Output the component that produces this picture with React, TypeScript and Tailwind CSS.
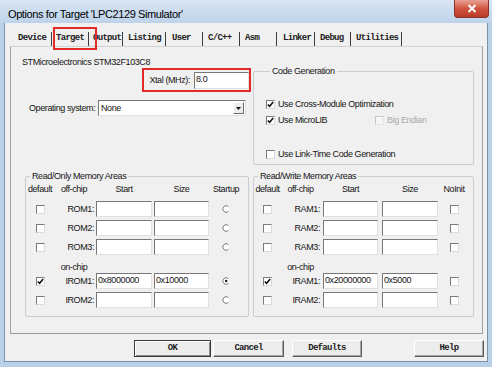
import React from 'react';

const sans = "font-['Liberation_Sans',Arial,sans-serif] text-[9px] leading-[12px] tracking-[-0.4px] text-[#151515] whitespace-nowrap";
const mono = "font-['Liberation_Mono','Courier_New',monospace] text-[9px] font-bold tracking-[-0.7px] text-[#1c1c1c] whitespace-nowrap";

const tabs: [string, string][] = [
  ['Device', 'w-[42px] pl-[8px]'],
  ['Target', 'w-[37px] pl-[4px]'],
  ['Output', 'w-[34px] pl-[4px]'],
  ['Listing', 'w-[43px] pl-[5px]'],
  ['User', 'w-[37px] pl-[6px]'],
  ['C/C++', 'w-[37px] pl-[5px]'],
  ['Asm', 'w-[37px] pl-[5px]'],
  ['Linker', 'w-[38px] pl-[6px]'],
  ['Debug', 'w-[36px] pl-[5px]'],
  ['Utilities', 'w-[51px] pl-[5px]'],
];

function Check({ on = false, disabled = false }: { on?: boolean; disabled?: boolean }) {
  return (
    <span
      className={
        disabled
          ? 'inline-block w-[9px] h-[9px] shrink-0 border border-t-[#c6c6c6] border-l-[#c6c6c6] border-r-[#e6e6e6] border-b-[#e6e6e6] bg-[#f5f5f5]'
          : 'inline-block w-[9px] h-[9px] shrink-0 border border-t-[#7a7a7a] border-l-[#7a7a7a] border-r-[#dadada] border-b-[#dadada] bg-white'
      }
    >
      {on && (
        <svg width="7" height="7" viewBox="0 0 7 7" className="block">
          <path d="M0.8 3.4 L2.6 5.3 L6.2 1" fill="none" stroke="#111" strokeWidth="1.5" />
        </svg>
      )}
    </span>
  );
}

function Radio({ on = false }: { on?: boolean }) {
  return (
    <svg width="8" height="8" viewBox="0 0 8 8" className="block">
      <circle cx="4" cy="4" r="3.2" fill="#fff" />
      <path d="M6.4 1.6 A3.3 3.3 0 1 0 6.4 6.4" fill="none" stroke="#7a7a7a" strokeWidth="1" />
      {on && <circle cx="4.2" cy="4" r="1.2" fill="#111" />}
    </svg>
  );
}

function Field({ w, value }: { w: string; value?: string }) {
  return (
    <div
      className={`${w} h-[16px] shrink-0 bg-white border border-t-[#777] border-l-[#777] border-r-[#e0e0e0] border-b-[#e0e0e0] pl-[1px] ${sans}`}
    >
      {value}
    </div>
  );
}

type Cols = { c1: string; c2: string; c3: string; c4: string; c5: string };

const romCols: Cols = {
  c1: 'w-[28px]',
  c2: 'w-[41px] pr-[1px]',
  c3: 'ml-[1px] w-[56px]',
  c4: 'ml-[2px] w-[55px]',
  c5: 'w-[34px]',
};

const ramCols: Cols = {
  c1: 'w-[27px]',
  c2: 'w-[40px] pr-[1px]',
  c3: 'ml-[2px] w-[55px]',
  c4: 'ml-[4px] w-[56px]',
  c5: 'w-[32px]',
};

type Row = { label: string; mt: string; def?: boolean; start?: string; size?: string; pick?: boolean };

function MemArea({
  title,
  cols,
  w,
  lastHead,
  radio,
  rows,
}: {
  title: string;
  cols: Cols;
  w: string;
  lastHead: string;
  radio: boolean;
  rows: Row[];
}) {
  return (
    <fieldset className={`${w} border border-[#c9ced3] rounded-[2px] pb-[8px]`}>
      <legend className={`${sans} ml-[4px] px-[2px]`}>{title}</legend>
      <div className={`flex pt-[1px] ${sans}`}>
        <span className={`${cols.c1} text-center`}>default</span>
        <span className={`${cols.c2} text-center`}>off-chip</span>
        <span className={`${cols.c3} text-center`}>Start</span>
        <span className={`${cols.c4} text-center`}>Size</span>
        <span className={`${cols.c5} text-center`}>{lastHead}</span>
      </div>
      {rows.map((r) =>
        r.label === 'on-chip' ? (
          <div key={r.label} className={`flex ${r.mt} ${sans}`}>
            <span className={cols.c1} />
            <span className={`${cols.c2} text-center`}>on-chip</span>
          </div>
        ) : (
          <div key={r.label} className={`flex items-center h-[16px] ${r.mt}`}>
            <span className={`${cols.c1} flex justify-center`}>
              <Check on={r.def} />
            </span>
            <span className={`${cols.c2} text-right ${sans}`}>{r.label}</span>
            <Field w={cols.c3} value={r.start} />
            <Field w={cols.c4} value={r.size} />
            <span className={`${cols.c5} flex justify-center`}>
              {radio ? <Radio on={r.pick} /> : <Check />}
            </span>
          </div>
        ),
      )}
    </fieldset>
  );
}

function Button({ label, w, main = false }: { label: string; w: string; main?: boolean }) {
  return (
    <div
      className={
        main
          ? `${w} h-[17px] flex items-center justify-center bg-[#ededed] border border-[#3a3a3a] shadow-[inset_1px_1px_0_#fff,inset_-1px_-1px_0_#8a8a8a] ${mono}`
          : `${w} h-[17px] flex items-center justify-center bg-[#ededed] border border-t-[#fff] border-l-[#fff] border-r-[#5a5a5a] border-b-[#5a5a5a] shadow-[inset_-1px_-1px_0_#a6a6a6] ${mono}`
      }
    >
      {label}
    </div>
  );
}

export default function App() {
  return (
    <div className="w-[492px] h-[367px] bg-[#b9d0e9] flex flex-col overflow-hidden">
      {/* title bar */}
      <div className="h-[23px] shrink-0 flex items-start justify-between bg-gradient-to-b from-[#d9e6f4] to-[#bed3eb]">
        <span className="pl-[8px] pt-[7px] font-['Liberation_Sans',Arial,sans-serif] text-[11px] leading-[14px] tracking-[-0.4px] text-black whitespace-nowrap">
          Options for Target &apos;LPC2129 Simulator&apos;
        </span>
        <div className="mr-[3px] w-[35px] h-[18px] rounded-b-[4px] border border-t-0 border-[#8a3227] bg-gradient-to-b from-[#e8a294] via-[#d0543f] to-[#b9392a] flex items-center justify-center">
          <svg width="10" height="9" viewBox="0 0 10 9">
            <path d="M1.5 1 L8.5 8 M8.5 1 L1.5 8" stroke="#fff" strokeWidth="2" />
          </svg>
        </div>
      </div>

      {/* client area */}
      <div className="relative ml-[4px] w-[484px] h-[339px] bg-[#f0f0f0] border-x border-b border-[#7d91aa] pt-[9px] flex flex-col">
        {/* tabs */}
        <div className="flex h-[14px] pl-[5px]">
          {tabs.map(([t, cls]) => (
            <span key={t} className={`${cls} h-[14px] leading-[13px] border-r border-r-[#3c3c3c] ${mono}`}>
              {t}
            </span>
          ))}
        </div>
        <div className="absolute left-[48px] top-[4px] w-[44px] h-[23px] border-2 border-[#e12a2a]" />

        {/* tab page */}
        <div className="ml-[5px] w-[473px] h-[288px] border-t border-t-[#d2d2d2] border-x border-x-[#a2a2a2] border-b border-b-[#9a9a9a] pl-[14px] pr-[8px] flex flex-col">
          <div className={`${sans} -ml-[3px] mt-[9px]`}>STMicroelectronics STM32F103C8</div>

          <div className="flex gap-[4px] -mt-[3px]">
            <div className="w-[224px] pt-[3px] flex flex-col">
              <div className="flex justify-end -mr-[2px]">
                <div className="h-[24px] border-2 border-[#e12a2a] pl-[5px] flex items-center gap-[4px]">
                  <span className={sans}>Xtal (MHz):</span>
                  <Field w="w-[55px] h-[17px]" value="8.0" />
                </div>
              </div>
              <div className="mt-[8px] flex items-center pl-[4px]">
                <span className={`${sans} w-[69px]`}>Operating system:</span>
                <div className="w-[148px] h-[16px] bg-white border border-t-[#777] border-l-[#777] border-r-[#e0e0e0] border-b-[#e0e0e0] flex items-center justify-between">
                  <span className={`${sans} pl-[2px]`}>None</span>
                  <span className="w-[11px] h-[12px] mr-[1px] bg-[#ececec] border border-t-[#fff] border-l-[#fff] border-r-[#6a6a6a] border-b-[#6a6a6a] flex items-center justify-center">
                    <svg width="5" height="3" viewBox="0 0 5 3">
                      <path d="M0 0 H5 L2.5 3 Z" fill="#111" />
                    </svg>
                  </span>
                </div>
              </div>
            </div>

            <fieldset className="w-[221px] border border-[#c9ced3] rounded-[2px] pb-[4px] pt-[21px] pl-[12px]">
              <legend className={`${sans} ml-[4px] px-[2px]`}>Code Generation</legend>
              <div className="flex items-center h-[12px] gap-[3px]">
                <Check on />
                <span className={sans}>Use Cross-Module Optimization</span>
              </div>
              <div className="flex items-center h-[12px] mt-[4px]">
                <div className="w-[109px] flex items-center gap-[3px]">
                  <Check on />
                  <span className={sans}>Use MicroLIB</span>
                </div>
                <div className="flex items-center gap-[3px]">
                  <Check disabled />
                  <span className={`${sans} text-[#a9a9a9]`}>Big Endian</span>
                </div>
              </div>
              <div className="flex items-center h-[12px] mt-[22px] gap-[3px]">
                <Check />
                <span className={sans}>Use Link-Time Code Generation</span>
              </div>
            </fieldset>
          </div>

          <div className="flex gap-[4px] mt-[5px]">
            <MemArea
              title="Read/Only Memory Areas"
              cols={romCols}
              w="w-[224px]"
              lastHead="Startup"
              radio
              rows={[
                { label: 'ROM1:', mt: 'mt-[6px]' },
                { label: 'ROM2:', mt: 'mt-[3px]' },
                { label: 'ROM3:', mt: 'mt-[3px]' },
                { label: 'on-chip', mt: 'mt-[6px]' },
                { label: 'IROM1:', mt: 'mt-0', def: true, start: '0x8000000', size: '0x10000', pick: true },
                { label: 'IROM2:', mt: 'mt-[3px]' },
              ]}
            />
            <MemArea
              title="Read/Write Memory Areas"
              cols={ramCols}
              w="w-[221px]"
              lastHead="NoInit"
              radio={false}
              rows={[
                { label: 'RAM1:', mt: 'mt-[6px]' },
                { label: 'RAM2:', mt: 'mt-[3px]' },
                { label: 'RAM3:', mt: 'mt-[3px]' },
                { label: 'on-chip', mt: 'mt-[6px]' },
                { label: 'IRAM1:', mt: 'mt-0', def: true, start: '0x20000000', size: '0x5000' },
                { label: 'IRAM2:', mt: 'mt-[3px]' },
              ]}
            />
          </div>
        </div>

        {/* dialog buttons */}
        <div className="flex mt-[6px] ml-[129px]">
          <Button label="OK" w="w-[77px]" main />
          <div className="ml-[2px]">
            <Button label="Cancel" w="w-[71px]" />
          </div>
          <div className="ml-[8px]">
            <Button label="Defaults" w="w-[70px]" />
          </div>
          <div className="ml-[52px]">
            <Button label="Help" w="w-[70px]" />
          </div>
        </div>
      </div>
    </div>
  );
}
